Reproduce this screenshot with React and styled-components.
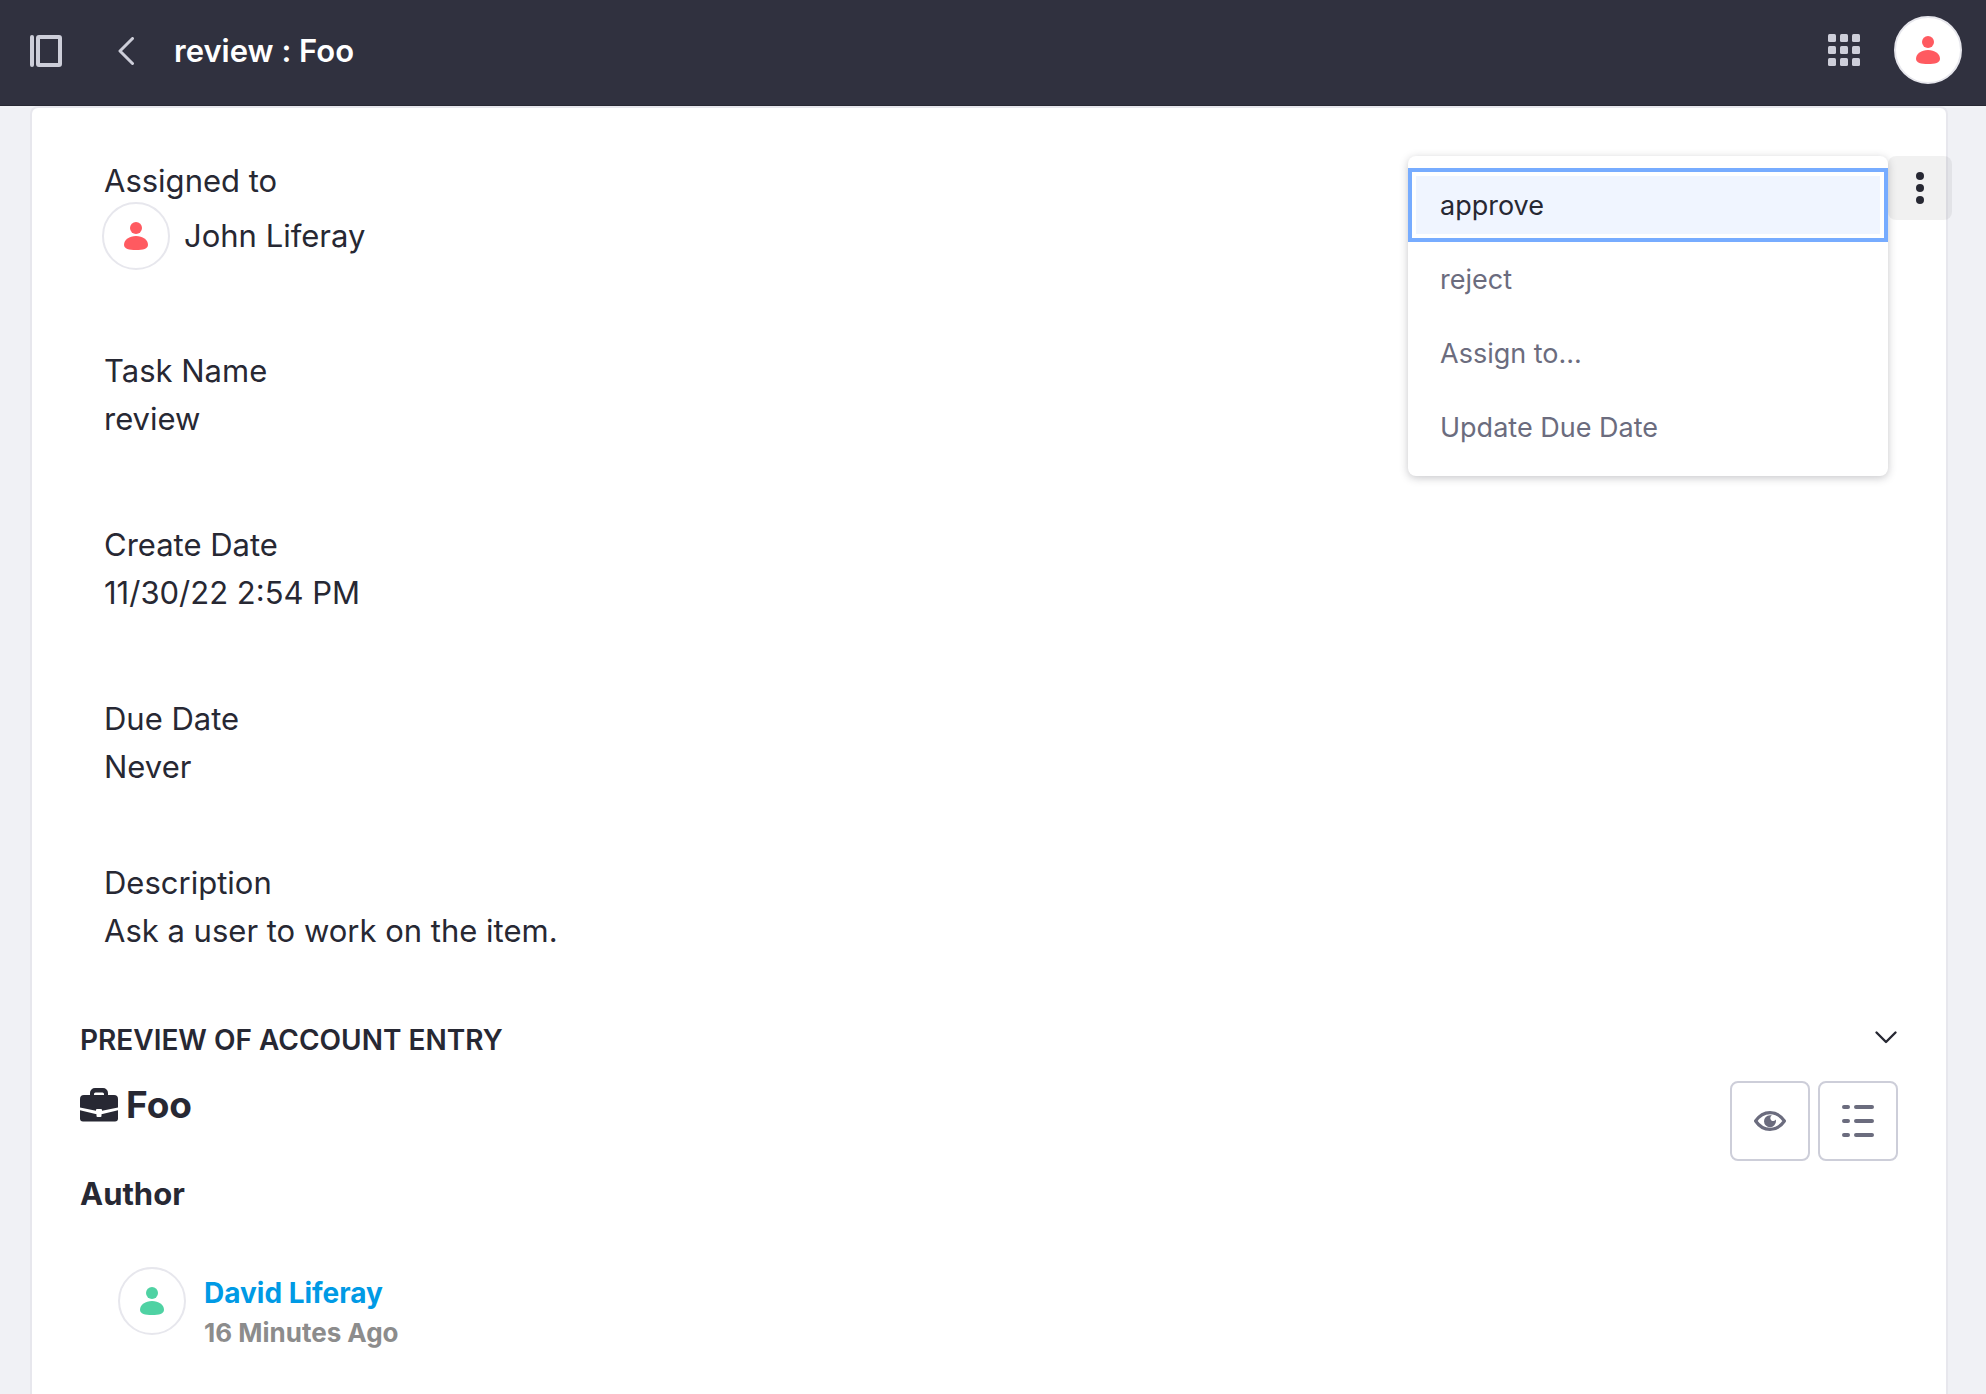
import React from "react";
import styled, { createGlobalStyle } from "styled-components";

const GlobalStyle = createGlobalStyle`
  *, *::before, *::after { box-sizing: border-box; }
  body {
    margin: 0;
    background: #f0f1f5;
    color: #272833;
    font-family: Inter, "Liberation Sans", sans-serif;
    font-size: 31px;
    line-height: 48px;
  }
  h1, h2, h3, h4, p, dl, dt, dd, ul { margin: 0; padding: 0; }
`;

const Page = styled.div`
  display: flex;
  flex-direction: column;
  min-height: 100vh;
`;

const TopBar = styled.header`
  display: flex;
  align-items: center;
  height: 106px;
  padding: 0 24px 3px 30px;
  background: #30313f;
  border-bottom: 1px solid #272833;
  color: #cdced9;
`;

const BarButton = styled.button`
  display: flex;
  padding: 0;
  border: 0;
  background: none;
  color: inherit;
  cursor: pointer;
`;

const BarLink = styled.a`
  display: flex;
  margin: 0 40px 0 56px;
  color: inherit;
`;

const BarTitle = styled.h1`
  flex: 1;
  color: #fff;
  font-size: 31px;
  font-weight: 600;
  font-variant-ligatures: no-contextual;
`;

const BarTools = styled.div`
  display: flex;
  align-items: center;
  gap: 34px;
  padding-bottom: 2px;
`;

const Avatar = styled.span`
  display: flex;
  flex: none;
  align-items: center;
  justify-content: center;
  width: 68px;
  height: 68px;
  border: 2px solid #e7e7ed;
  border-radius: 50%;
  background: #fff;
  color: ${(p) => (p.$tone === "green" ? "#4fd2a3" : "#ff5a60")};
`;

const Main = styled.main`
  display: flex;
  flex: 1;
  padding: 0 38px 0 30px;
`;

const Sheet = styled.div`
  flex: 1;
  padding: 48px 48px 0;
  border: 2px solid #e7e7ed;
  border-bottom: 0;
  border-radius: 8px 8px 0 0;
  background: #fff;
`;

const TaskHead = styled.div`
  display: flex;
  align-items: flex-start;
  justify-content: space-between;
`;

const Fields = styled.dl`
  padding: 1px 0 0 24px;
`;

const fieldGaps = { normal: 78, tight: 68, last: 64 };

const Field = styled.div`
  margin-bottom: ${(p) => fieldGaps[p.$gap || "normal"]}px;
`;

const Person = styled.dd`
  display: flex;
  align-items: center;
  gap: 14px;
  margin: -3px 0 -1px -2px;
`;

const Actions = styled.div`
  position: relative;
  margin-right: -54px;
`;

const KebabButton = styled.button`
  display: flex;
  align-items: center;
  justify-content: center;
  width: 64px;
  height: 64px;
  padding: 0;
  border: 0;
  border-radius: 8px;
  background: rgba(0, 0, 0, 0.055);
  color: #272833;
  cursor: pointer;
`;

const Menu = styled.ul`
  position: absolute;
  top: 0;
  right: 100%;
  width: 480px;
  padding: 12px 0;
  border-radius: 8px;
  background: #fff;
  box-shadow: 0 2px 8px rgba(39, 40, 51, 0.26);
  list-style: none;
`;

const MenuItem = styled.button`
  display: block;
  width: 100%;
  height: 74px;
  padding: 2px 32px 0;
  border: 0;
  background: ${(p) => (p.$active ? "#f0f5ff" : "transparent")};
  box-shadow: ${(p) => (p.$active ? "inset 0 0 0 4px #77acff, inset 0 0 0 8px #fff" : "none")};
  color: ${(p) => (p.$active ? "#272833" : "#6b6c7e")};
  font: inherit;
  font-size: 27px;
  text-align: left;
  cursor: pointer;
`;

const PanelToggle = styled.button`
  display: flex;
  align-items: center;
  justify-content: space-between;
  width: 100%;
  padding: 0;
  border: 0;
  background: none;
  color: #272833;
  font: inherit;
  font-size: 28px;
  font-weight: 600;
  line-height: 42px;
  text-transform: uppercase;
  cursor: pointer;
`;

const EntryHead = styled.div`
  display: flex;
  align-items: flex-start;
  justify-content: space-between;
  margin: 20px 0 9px;
`;

const EntryTitle = styled.h3`
  display: flex;
  align-items: center;
  gap: 8px;
  font-size: 37px;
  font-weight: 700;
`;

const ButtonRow = styled.div`
  display: flex;
  gap: 8px;
`;

const IconButton = styled.button`
  display: flex;
  align-items: center;
  justify-content: center;
  width: 80px;
  height: 80px;
  padding: 0;
  border: 2px solid #cdced9;
  border-radius: 8px;
  background: #fff;
  color: #6b6c7e;
  cursor: pointer;
`;

const AuthorHeading = styled.h4`
  font-size: 31px;
  font-weight: 700;
`;

const AuthorRow = styled.div`
  display: flex;
  gap: 18px;
  margin: 49px 0 48px 38px;
`;

const AuthorText = styled.div`
  padding-top: 6px;
  font-weight: 700;
  line-height: 40px;
`;

const AuthorLink = styled.a`
  display: block;
  color: #009ae5;
  font-size: 28px;
  text-decoration: none;
`;

const Time = styled.p`
  color: #8c8c8c;
  font-size: 26px;
`;

const UserIcon = () => (
  <svg width="24" height="28" viewBox="0 0 24 28" fill="currentColor" aria-hidden="true">
    <circle cx="12" cy="6" r="6" />
    <path d="M12 14c6.600 0 12 3.800 12 8.700 0 4-5 5.300-12 5.300S0 26.700 0 22.700C0 17.800 5.400 14 12 14z" />
  </svg>
);

const SidebarIcon = () => (
  <svg width="32" height="32" viewBox="0 0 32 32" fill="none" stroke="currentColor" strokeWidth="4" aria-hidden="true">
    <path d="M2 2v28" strokeLinecap="round" />
    <rect x="8" y="2" width="22" height="28" rx="1" />
  </svg>
);

const BackIcon = () => (
  <svg width="16" height="28" viewBox="0 0 16 28" fill="none" stroke="currentColor" strokeWidth="3" strokeLinecap="round" strokeLinejoin="round" aria-hidden="true">
    <path d="M14.500 1.500 2 14l12.500 12.500" />
  </svg>
);

const GridIcon = () => (
  <svg width="32" height="32" viewBox="0 0 32 32" fill="currentColor" aria-hidden="true">
    {[0, 12, 24].map((y) =>
      [0, 12, 24].map((x) => <rect key={`${x}-${y}`} x={x} y={y} width="8" height="8" rx="1.500" />)
    )}
  </svg>
);

const KebabIcon = () => (
  <svg width="8" height="32" viewBox="0 0 8 32" fill="currentColor" aria-hidden="true">
    <circle cx="4" cy="4" r="4" />
    <circle cx="4" cy="16" r="4" />
    <circle cx="4" cy="28" r="4" />
  </svg>
);

const ChevronIcon = () => (
  <svg width="24" height="24" viewBox="0 0 24 24" fill="none" stroke="currentColor" strokeWidth="2.400" strokeLinecap="round" strokeLinejoin="round" aria-hidden="true">
    <path d="m2.500 4.500 9.500 9.500 9.500-9.500" />
  </svg>
);

const BriefcaseIcon = () => (
  <svg width="38" height="34" viewBox="0 0 38 34" fill="currentColor" aria-hidden="true">
    <path fillRule="evenodd" d="M10 7V5a5 5 0 0 1 5-5h8a5 5 0 0 1 5 5v2h6a4 4 0 0 1 4 4v8.500l-16 3.300V22a1 1 0 0 0-1-1h-4a1 1 0 0 0-1 1v.8L0 19.500V11a4 4 0 0 1 4-4zm4 0h10V6a1.500 1.500 0 0 0-1.500-1.500h-7A1.500 1.500 0 0 0 14 6z" />
    <path d="m0 22.300 16.500 4V28a1 1 0 0 0 1 1h3a1 1 0 0 0 1-1v-1.700l16.500-4V30.500a3 3 0 0 1-3 3H3a3 3 0 0 1-3-3z" />
  </svg>
);

const EyeIcon = () => (
  <svg width="32" height="20" viewBox="0 0 32 20" aria-hidden="true">
    <path d="M1.600 10C5 5 10 1.600 16 1.600S27 5 30.400 10C27 15 22 18.400 16 18.400S5 15 1.600 10z" fill="none" stroke="currentColor" strokeWidth="3.200" strokeLinejoin="round" />
    <path d="M16 4.200c.8 0 1.300.1 1.900.3a2.900 2.900 0 1 0 3.900 3.900c.1.500.2 1 .2 1.600a6 6 0 1 1-6-5.800z" fill="currentColor" />
  </svg>
);

const ListIcon = () => (
  <svg width="32" height="32" viewBox="0 0 32 32" stroke="currentColor" strokeWidth="4" strokeLinecap="round" aria-hidden="true">
    <path d="M2 2h4M14 2h16M2 16h4M14 16h16M2 30h4M14 30h16" />
  </svg>
);

const details = [
  { label: "Task Name", value: "review" },
  { label: "Create Date", value: "11/30/22 2:54 PM" },
  { label: "Due Date", value: "Never", gap: "tight" },
  { label: "Description", value: "Ask a user to work on the item.", gap: "last" },
];

const menuItems = ["approve", "reject", "Assign to...", "Update Due Date"];

export default function App() {
  return (
    <Page>
      <GlobalStyle />
      <TopBar>
        <BarButton type="button" aria-label="Toggle sidebar">
          <SidebarIcon />
        </BarButton>
        <BarLink href="#back" aria-label="Back">
          <BackIcon />
        </BarLink>
        <BarTitle>review : Foo</BarTitle>
        <BarTools>
          <BarButton type="button" aria-label="Applications">
            <GridIcon />
          </BarButton>
          <BarButton type="button" aria-label="User menu">
            <Avatar>
              <UserIcon />
            </Avatar>
          </BarButton>
        </BarTools>
      </TopBar>
      <Main>
        <Sheet>
          <TaskHead>
            <Fields>
              <Field>
                <dt>Assigned to</dt>
                <Person>
                  <Avatar>
                    <UserIcon />
                  </Avatar>
                  John Liferay
                </Person>
              </Field>
              {details.map((d) => (
                <Field key={d.label} $gap={d.gap}>
                  <dt>{d.label}</dt>
                  <dd>{d.value}</dd>
                </Field>
              ))}
            </Fields>
            <Actions>
              <KebabButton type="button" aria-label="Task actions" aria-expanded="true">
                <KebabIcon />
              </KebabButton>
              <Menu>
                {menuItems.map((item, i) => (
                  <li key={item}>
                    <MenuItem type="button" $active={i === 0}>
                      {item}
                    </MenuItem>
                  </li>
                ))}
              </Menu>
            </Actions>
          </TaskHead>
          <section>
            <h2>
              <PanelToggle type="button" aria-expanded="true">
                Preview of Account Entry
                <ChevronIcon />
              </PanelToggle>
            </h2>
            <EntryHead>
              <EntryTitle>
                <BriefcaseIcon />
                Foo
              </EntryTitle>
              <ButtonRow>
                <IconButton type="button" aria-label="View">
                  <EyeIcon />
                </IconButton>
                <IconButton type="button" aria-label="Details">
                  <ListIcon />
                </IconButton>
              </ButtonRow>
            </EntryHead>
            <AuthorHeading>Author</AuthorHeading>
            <AuthorRow>
              <Avatar $tone="green">
                <UserIcon />
              </Avatar>
              <AuthorText>
                <AuthorLink href="#author">David Liferay</AuthorLink>
                <Time>16 Minutes Ago</Time>
              </AuthorText>
            </AuthorRow>
          </section>
        </Sheet>
      </Main>
    </Page>
  );
}
